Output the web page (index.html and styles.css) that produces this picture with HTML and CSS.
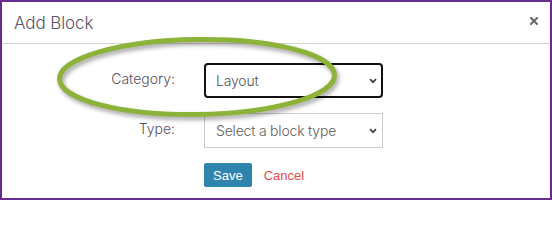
FILE: index.html
```html
<!DOCTYPE html>
<html lang="en">
<head>
<meta charset="utf-8">
<title>Add Block</title>
<link rel="stylesheet" href="styles.css">
</head>
<body>
<div class="modal">
  <div class="modal-header">
    <h4 class="modal-title">Add Block</h4>
    <button class="close" type="button" aria-label="Close">
      <svg viewBox="0 0 8 8" width="8" height="8"><path d="M1 1L7 7M7 1L1 7" stroke="#666" stroke-width="2" stroke-linecap="square"/></svg>
    </button>
  </div>
  <div class="modal-body">
    <form class="form">
      <label class="form-label" for="cat">Category:</label>
      <div class="select-wrap">
        <select id="cat" class="select select-focus">
          <option>Layout</option>
        </select>
        <svg class="chevron" viewBox="0 0 8 6" width="8" height="6"><path d="M1 1.2L4 4.2L7 1.2" fill="none" stroke="#444" stroke-width="1.8"/></svg>
      </div>
      <label class="form-label" for="type">Type:</label>
      <div class="select-wrap">
        <select id="type" class="select">
          <option>Select a block type</option>
        </select>
        <svg class="chevron" viewBox="0 0 8 6" width="8" height="6"><path d="M1 1.2L4 4.2L7 1.2" fill="none" stroke="#444" stroke-width="1.8"/></svg>
      </div>
      <span></span>
      <div class="actions">
        <button class="btn-save" type="button">Save</button>
        <a class="cancel" href="#">Cancel</a>
      </div>
    </form>
  </div>
  <svg class="highlight" viewBox="0 0 552 200" width="552" height="200">
    <ellipse cx="197" cy="77" rx="137.5" ry="37.5" fill="none" stroke="#8db23a" stroke-width="5" transform="rotate(-0.8 197 77)"/>
  </svg>
</div>
</body>
</html>
```
FILE: styles.css
```css
html, body {
  margin: 0;
  padding: 0;
  background: #fff;
}

.modal {
  position: relative;
  box-sizing: border-box;
  width: 552px;
  height: 200px;
  border: 2px solid #662c90;
  background: #fff;
  font-family: Inter, "Noto Sans", sans-serif;
  overflow: hidden;
}

.modal-header {
  height: 41px;
  border-bottom: 1px solid #d4d4d4;
  display: flex;
  align-items: center;
  justify-content: space-between;
  padding: 0 12px;
}

.modal-title {
  margin: 0;
  font-size: 17px;
  font-weight: 300;
  color: #5a5466;
  letter-spacing: -0.1px;
}

.close {
  border: 0;
  background: none;
  padding: 0;
  width: 8px;
  height: 8px;
  display: flex;
  margin-top: -3px;
}

.modal-body {
  padding: 19px 0 0 0;
}

.form {
  display: grid;
  grid-template-columns: 173px 179px;
  column-gap: 29px;
  row-gap: 15px;
}

.form-label {
  text-align: right;
  font-size: 14px;
  font-weight: 300;
  line-height: 20px;
  padding-top: 6px;
  color: #56505f;
}

.select-wrap {
  position: relative;
  width: 179px;
  height: 35px;
}

.select {
  box-sizing: border-box;
  -webkit-appearance: none;
  appearance: none;
  width: 179px;
  height: 35px;
  margin: 0;
  padding: 0 20px 0 11px;
  border: 1px solid #cccccc;
  border-radius: 0;
  background: #fff;
  font-family: Inter, "Noto Sans", sans-serif;
  font-size: 14px;
  font-weight: 300;
  letter-spacing: -0.2px;
  color: #5e5e5e;
}

.select-focus {
  border: 2px solid #111;
  border-radius: 4px;
  padding-left: 10px;
  color: #555;
}

.chevron {
  position: absolute;
  right: 6px;
  top: 15px;
  pointer-events: none;
}

.actions {
  display: flex;
  align-items: center;
  gap: 12px;
}

.btn-save {
  height: 24px;
  padding: 0 9px;
  border: 0;
  border-radius: 2px;
  background: #2f84ae;
  color: #fff;
  font-family: "Liberation Sans", Arial, sans-serif;
  font-size: 13px;
}

.cancel {
  font-family: "Liberation Sans", Arial, sans-serif;
  font-size: 13px;
  color: #ea4a4d;
  text-decoration: none;
}

.highlight {
  position: absolute;
  left: -2px;
  top: -2px;
  pointer-events: none;
  filter: drop-shadow(2px 3px 2px rgba(0, 0, 0, 0.35));
}
```
